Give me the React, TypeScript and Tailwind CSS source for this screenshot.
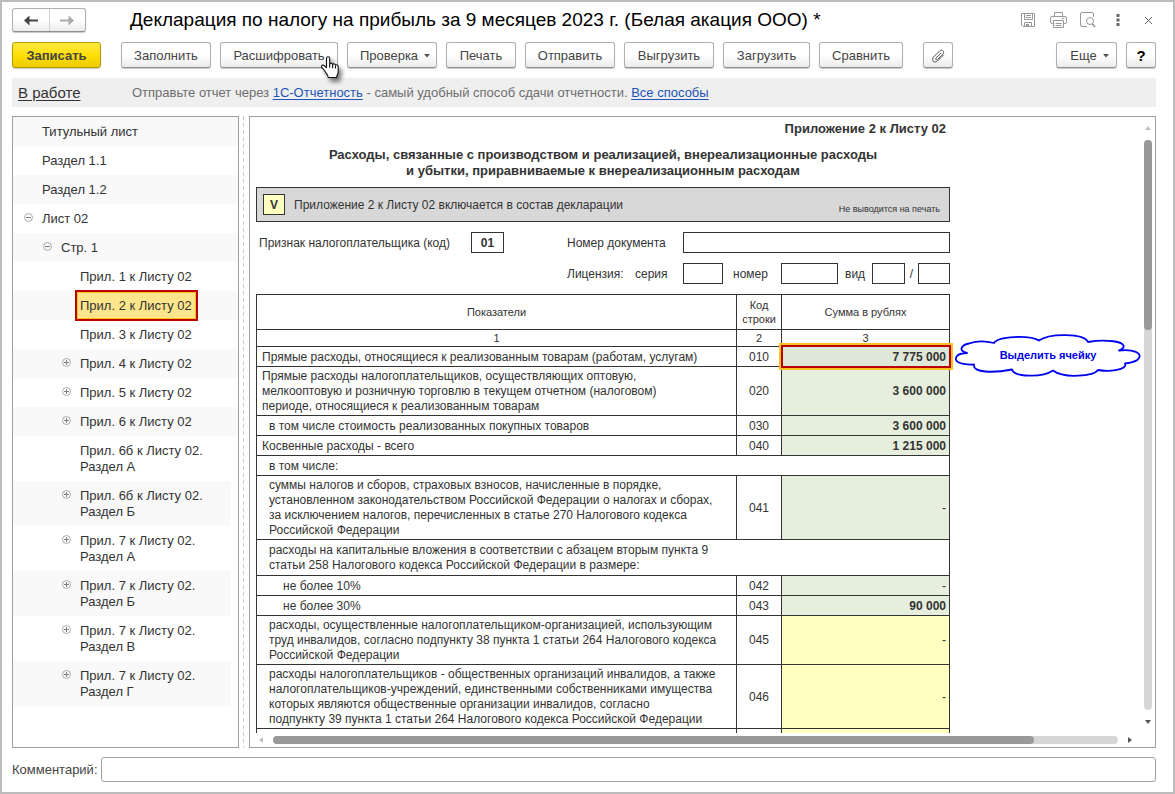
import React from 'react';

type TreeItem = {
  label: React.ReactNode;
  level: 0 | 1 | 2;
  toggle?: 'plus' | 'minus';
  selected?: boolean;
  tall?: boolean;
};

type ReportRow = {
  text: React.ReactNode;
  height: string;
  indent?: string;
  code?: string;
  value?: string;
  fill?: 'green' | 'yellow';
  active?: boolean;
};

const tree: TreeItem[] = [
  { label: 'Титульный лист', level: 0 },
  { label: 'Раздел 1.1', level: 0 },
  { label: 'Раздел 1.2', level: 0 },
  { label: 'Лист 02', level: 0, toggle: 'minus' },
  { label: 'Стр. 1', level: 1, toggle: 'minus' },
  { label: 'Прил. 1 к Листу 02', level: 2 },
  { label: 'Прил. 2 к Листу 02', level: 2, selected: true },
  { label: 'Прил. 3 к Листу 02', level: 2 },
  { label: 'Прил. 4 к Листу 02', level: 2, toggle: 'plus' },
  { label: 'Прил. 5 к Листу 02', level: 2, toggle: 'plus' },
  { label: 'Прил. 6 к Листу 02', level: 2, toggle: 'plus' },
  { label: <>Прил. 6б к Листу 02.<br />Раздел А</>, level: 2, tall: true },
  { label: <>Прил. 6б к Листу 02.<br />Раздел Б</>, level: 2, toggle: 'plus', tall: true },
  { label: <>Прил. 7 к Листу 02.<br />Раздел А</>, level: 2, toggle: 'plus', tall: true },
  { label: <>Прил. 7 к Листу 02.<br />Раздел Б</>, level: 2, toggle: 'plus', tall: true },
  { label: <>Прил. 7 к Листу 02.<br />Раздел В</>, level: 2, toggle: 'plus', tall: true },
  { label: <>Прил. 7 к Листу 02.<br />Раздел Г</>, level: 2, toggle: 'plus', tall: true },
];

const rows: ReportRow[] = [
  { text: 'Прямые расходы, относящиеся к реализованным товарам (работам, услугам)', height: 'h-5', code: '010', value: '7 775 000', fill: 'green', active: true },
  {
    text: <>Прямые расходы налогоплательщиков, осуществляющих оптовую,<br />мелкооптовую и розничную торговлю в текущем отчетном (налоговом)<br />периоде, относящиеся к реализованным товарам</>,
    height: 'h-[49px]', code: '020', value: '3 600 000', fill: 'green',
  },
  { text: 'в том числе стоимость реализованных покупных товаров', height: 'h-5', indent: 'pl-3', code: '030', value: '3 600 000', fill: 'green' },
  { text: 'Косвенные расходы - всего', height: 'h-5', code: '040', value: '1 215 000', fill: 'green' },
  { text: 'в том числе:', height: 'h-5', indent: 'pl-3' },
  {
    text: <>суммы налогов и сборов, страховых взносов, начисленные в порядке,<br />установленном законодательством Российской Федерации о налогах и сборах,<br />за исключением налогов, перечисленных в статье 270 Налогового кодекса<br />Российской Федерации</>,
    height: 'h-16', indent: 'pl-3', code: '041', value: '-', fill: 'green',
  },
  {
    text: <>расходы на капитальные вложения в соответствии с абзацем вторым пункта 9<br />статьи 258 Налогового кодекса Российской Федерации в размере:</>,
    height: 'h-9', indent: 'pl-3',
  },
  { text: 'не более 10%', height: 'h-5', indent: 'pl-[26px]', code: '042', value: '-', fill: 'green' },
  { text: 'не более 30%', height: 'h-5', indent: 'pl-[26px]', code: '043', value: '90 000', fill: 'green' },
  {
    text: <>расходы, осуществленные налогоплательщиком-организацией, использующим<br />труд инвалидов, согласно подпункту 38 пункта 1 статьи 264 Налогового кодекса<br />Российской Федерации</>,
    height: 'h-[49px]', indent: 'pl-3', code: '045', value: '-', fill: 'yellow',
  },
  {
    text: <>расходы налогоплательщиков - общественных организаций инвалидов, а также<br />налогоплательщиков-учреждений, единственными собственниками имущества<br />которых являются общественные организации инвалидов, согласно<br />подпункту 39 пункта 1 статьи 264 Налогового кодекса Российской Федерации</>,
    height: 'h-16', indent: 'pl-3', code: '046', value: '-', fill: 'yellow',
  },
  { text: '', height: 'h-5', code: ' ', value: '', fill: 'yellow' },
];

const levelPadding = ['pl-[10px]', 'pl-[29px]', 'pl-12'];

const ToolButton: React.FC<{ className?: string; children: React.ReactNode; label?: string }> = ({ className = '', children, label }) => (
  <button
    type="button"
    aria-label={label}
    className={`relative flex h-[26px] shrink-0 items-center justify-center whitespace-nowrap rounded-[3px] border border-[#b0b0b0] border-b-[#8f8f8f] bg-gradient-to-b from-white from-50% to-[#ececec] pt-0.5 text-[#444] shadow-[0_1px_1px_#c8c8c8] ${className}`}
  >
    {children}
  </button>
);

const Caret = () => (
  <svg width="6" height="4" viewBox="0 0 6 4" className="ml-1.5" fill="#555"><path d="M0 0h6L3 3.500z" /></svg>
);

const Toggle: React.FC<{ kind: 'plus' | 'minus' }> = ({ kind }) => (
  <svg width="9" height="9" viewBox="0 0 9 9" fill="none" stroke="#a8a8a8">
    <circle cx="4.500" cy="4.500" r="4" />
    <path d={kind === 'plus' ? 'M2 4.500h5M4.500 2v5' : 'M2 4.500h5'} stroke="#808080" />
  </svg>
);

const HandCursor = () => (
  <svg width="32" height="34" viewBox="0 0 32 34" className="pointer-events-none absolute left-[99px] top-[12px] z-10 drop-shadow-[3px_4px_2px_rgba(0,0,0,0.5)]">
    <path
      d="M6.5 3.5c0-2.4 3.2-2.4 3.2 0v5.6c.6-1.2 2.7-1 2.9.4.8-1 2.7-.7 2.9.7.9-.8 2.7-.3 2.7 1.3v5.3c0 2-1.5 3-1.5 5.7H8.2c0-2.5-2.2-4.3-3.7-6.9-.9-1.5-2.3-2.6-2.9-3.7-.6-1.5 1.1-2.3 2.4-1.4l2.5 2.2z"
      fill="#fff" stroke="#111" strokeWidth="1.1" strokeLinejoin="round"
    />
    <path d="M9.7 8.8v4M12.6 9.6v3.6M15.5 10.4v3" fill="none" stroke="#111" strokeWidth="1.1" />
  </svg>
);

const Header = () => (
  <header className="flex h-6 items-center">
    <div className="flex h-6 w-[74px] rounded-[3px] border border-[#b0b0b0] border-b-[#8f8f8f] bg-gradient-to-b from-white from-50% to-[#ececec] shadow-[0_1px_1px_#c8c8c8]">
      <button type="button" aria-label="Назад" className="flex flex-1 items-center justify-center border-r border-[#d0d0d0]">
        <svg width="14" height="11" viewBox="0 0 14 11" fill="#444"><path d="M0 5.500L5.500 0.500V4.500H14v2H5.500v4z" /></svg>
      </button>
      <button type="button" aria-label="Вперед" className="flex flex-1 items-center justify-center">
        <svg width="14" height="11" viewBox="0 0 14 11" fill="#aaa"><path d="M14 5.500L8.500 0.500V4.500H0v2h8.500v4z" /></svg>
      </button>
    </div>
    <h1 className="ml-11 flex-1 whitespace-nowrap text-[19px] leading-6 text-black">
      Декларация по налогу на прибыль за 9 месяцев 2023 г. (Белая акация ООО) *
    </h1>
    <div className="flex items-center pr-[3px]">
      <button type="button" aria-label="Сохранить">
        <svg width="16" height="16" viewBox="0 0 16 16" fill="none" stroke="#999">
          <path d="M1.500 1.500h13v13H3l-1.500-1.500zM4.500 1.500v6h8v-6M6 3.500h5M6 5.500h5M4.500 14.500v-4h7v4" />
          <path d="M6 12h3v3H6z" fill="#999" stroke="none" />
        </svg>
      </button>
      <button type="button" aria-label="Печать документа" className="ml-[14px]">
        <svg width="17" height="16" viewBox="0 0 17 16" fill="none" stroke="#999">
          <path d="M4.500 4.500v-4h8v4M3.500 11.500H2A1.500 1.500 0 01.5 10V6A1.500 1.500 0 012 4.500h13A1.500 1.500 0 0116.500 6v4a1.500 1.500 0 01-1.500 1.500h-1.500M3.500 8.500h10v7h-10zM5.500 11.500h6M5.500 13.500h6M12 6.500h2.500" />
        </svg>
      </button>
      <button type="button" aria-label="Предварительный просмотр" className="ml-[13px]">
        <svg width="16" height="16" viewBox="0 0 16 16" fill="none" stroke="#999">
          <path d="M13.500 5V2A1.500 1.500 0 0012 .5H2A1.500 1.500 0 00.5 2v11A1.500 1.500 0 002 14.500h5" />
          <circle cx="10" cy="9" r="3.500" />
          <path d="M12.200 11.800l2.800 3" strokeWidth="1.800" />
        </svg>
      </button>
      <button type="button" aria-label="Меню" className="ml-5">
        <svg width="4" height="12" viewBox="0 0 4 12" fill="#666"><path d="M.5 0h3v3h-3zM.5 4.500h3v3h-3zM.5 9h3v3h-3z" /></svg>
      </button>
      <button type="button" aria-label="Закрыть" className="ml-6">
        <svg width="9" height="9" viewBox="0 0 9 9" stroke="#666"><path d="M1 1l7 7M8 1L1 8" /></svg>
      </button>
    </div>
  </header>
);

const Toolbar = () => (
  <div className="mt-[10px] flex">
    <button
      type="button"
      className="mr-5 h-[26px] w-[89px] rounded-[3px] border border-[#b09a00] bg-gradient-to-b from-[#ffe83a] via-[#ffe000] to-[#edcb00] pt-0.5 font-bold text-[#444] shadow-[0_1px_1px_#c8c8c8]"
    >
      Записать
    </button>
    <div className="flex flex-1 gap-[9px]">
      <ToolButton className="w-[90px]">Заполнить</ToolButton>
      <ToolButton className="w-[118px]">
        Расшифровать
        <HandCursor />
      </ToolButton>
      <ToolButton className="w-[90px] pl-1.5">Проверка<Caret /></ToolButton>
      <ToolButton className="w-[70px]">Печать</ToolButton>
      <ToolButton className="w-[90px]">Отправить</ToolButton>
      <ToolButton className="w-[90px]">Выгрузить</ToolButton>
      <ToolButton className="w-[87px]">Загрузить</ToolButton>
      <ToolButton className="w-[84px]">Сравнить</ToolButton>
      <ToolButton className="ml-[11px] w-[30px]" label="Присоединенные файлы">
        <svg width="14" height="14" viewBox="0 0 14 14" fill="none" stroke="#555" strokeLinecap="round">
          <path d="M10 4L5 9c-1 1.200.400 2.400 1.500 1.400l5.300-5.300c2.400-2.600-.9-5.400-3.200-3.200L2.500 8c-2.700 3 .9 6.900 4 4l6-6" />
        </svg>
      </ToolButton>
    </div>
    <div className="flex gap-[9px]">
      <ToolButton className="w-[61px] pl-1.5">Еще<Caret /></ToolButton>
      <ToolButton className="w-[30px] text-[15px] font-bold text-black">?</ToolButton>
    </div>
  </div>
);

const InfoBar = () => (
  <div className="mt-[10px] flex h-[29px] items-center bg-[#efefef] pl-1.5">
    <a href="#status" className="w-[114px] text-[15px] text-[#333] underline underline-offset-2">В работе</a>
    <p className="whitespace-nowrap text-[#6e6e6e]">
      Отправьте отчет через <a href="#reporting" className="text-[#1f54b5] underline underline-offset-2">1С-Отчетность</a> - самый удобный способ сдачи отчетности.{' '}
      <a href="#all" className="text-[#1f54b5] underline underline-offset-2">Все способы</a>
    </p>
  </div>
);

const Sections = () => (
  <nav className="w-[227px] shrink-0 overflow-hidden border border-[#a0a0a0]">
    <ul>
      {tree.map((item, i) => (
        <li
          key={i}
          className={`flex ${levelPadding[item.level]} ${item.tall ? 'mr-[7px] h-[45px]' : 'h-[29px]'} ${i % 2 === 0 ? 'bg-[#f9f9f9]' : 'bg-white'}`}
        >
          <span className="w-[14px] shrink-0 pt-[9px] pl-px">{item.toggle && <Toggle kind={item.toggle} />}</span>
          {item.selected ? (
            <button type="button" className="-my-px w-[123px] border-2 border-[#b90000] bg-[#fde58b] pl-[3px] text-left leading-4 text-[#333] shadow-[inset_0_0_0_1px_#fbc21f]">
              {item.label}
            </button>
          ) : (
            <button type="button" className="pl-[5px] text-left leading-4 text-[#333]">{item.label}</button>
          )}
        </li>
      ))}
    </ul>
  </nav>
);

const Field: React.FC<{ className: string; label: string; value?: string }> = ({ className, label, value }) => (
  <input aria-label={label} defaultValue={value} className={`h-[21px] min-w-0 rounded-none border border-[#333] bg-white text-center font-bold outline-none ${className}`} />
);

const Callout = () => (
  <span className="absolute -top-[14px] left-full z-10 ml-[5px] flex h-[44px] w-[188px] items-center justify-center text-[11px] font-bold text-[#0000e6]">
    <svg width="188" height="44" viewBox="0 0 188 44" className="absolute inset-0" fill="#fff" stroke="#0000f0" strokeWidth="1.800" strokeLinejoin="round">
      <path d="M40 10C44 3 75 2 85 7.500C95 0 130 0 134 9C150 6 174 8 169 15C167 17 166 17 165 17.500C180 16 188 20 185 25C183 29 175 30 171 30.500C174 37 155 39 144 37C140 43 110 46 99 37.500C88 45 60 44 58 36.500C40 40 18 40 20 31.500C5 32 -1 28 3 23C5 21 9 20 13 20C4 18 7 12 15 10.500C22 8 32 8 40 10Z" />
    </svg>
    <span className="relative">Выделить ячейку</span>
  </span>
);

const ReportTable = () => (
  <table className="mt-[10px] w-full table-fixed border-collapse leading-[15px]">
    <colgroup>
      <col className="w-[480px]" />
      <col className="w-[45px]" />
      <col />
    </colgroup>
    <thead>
      <tr className="h-[35px] text-[11px] leading-[14px]">
        <th className="border border-[#333] p-0 font-normal">Показатели</th>
        <th className="border border-[#333] p-0 font-normal">Код<br />строки</th>
        <th className="border border-[#333] p-0 font-normal">Сумма в рублях</th>
      </tr>
      <tr className="h-[17px] text-[11px] leading-[14px]">
        <th className="border border-[#333] p-0 font-normal">1</th>
        <th className="border border-[#333] p-0 font-normal">2</th>
        <th className="border border-[#333] p-0 font-normal">3</th>
      </tr>
    </thead>
    <tbody>
      {rows.map((row, i) => (
        <tr key={i} className={row.height}>
          <td colSpan={row.code ? 1 : 3} className={`whitespace-nowrap border border-[#333] pb-0 pr-0 pt-px ${row.indent || 'pl-[5px]'}`}>
            {row.text}
          </td>
          {row.code && (
            <>
              <td className="border border-[#333] px-0 pb-0 pt-px text-center">{row.code}</td>
              <td className={`border border-[#333] pb-0 pl-0 pr-[3px] pt-px text-right ${row.active ? 'relative z-10' : ''} ${row.value === '-' ? 'font-normal' : 'font-bold'} ${row.fill === 'green' ? 'bg-[#e6efdd]' : 'bg-[#ffffc0]'}`}>
                {row.active && (
                  <>
                    <span className="absolute -bottom-1 -left-[3px] -right-1 -top-1 border-2 border-[#fbc21f] bg-[#dfe7d8]">
                      <span className="block h-full border-2 border-[#b90000]" />
                    </span>
                    <Callout />
                  </>
                )}
                <span className="relative">{row.value}</span>
              </td>
            </>
          )}
        </tr>
      ))}
    </tbody>
  </table>
);

const Report = () => (
  <div className="w-[694px] text-xs text-[#333]">
    <p className="pr-1 pt-1 text-right text-[13px] font-bold leading-4">Приложение 2 к Листу 02</p>
    <h2 className="mt-[10px] text-center text-[13px] font-bold leading-4">
      Расходы, связанные с производством и реализацией, внереализационные расходы<br />
      и убытки, приравниваемые к внереализационным расходам
    </h2>
    <div className="mt-2 flex h-[35px] items-center border border-[#333] bg-[#d8d8d8] pl-1.5 pr-[9px]">
      <label className="flex flex-1 items-center">
        <input type="checkbox" defaultChecked className="sr-only" />
        <span className="mr-[9px] flex h-[21px] w-[22px] items-center justify-center border border-[#333] bg-[#ffffc0] font-bold">V</span>
        Приложение 2 к Листу 02 включается в состав декларации
      </label>
      <span className="pt-2 text-[9px]">Не выводится на печать</span>
    </div>
    <div className="mt-[10px] flex items-center">
      <span className="w-[215px] pl-[3px]">Признак налогоплательщика (код)</span>
      <Field className="w-[33px]" label="Признак налогоплательщика (код)" value="01" />
      <span className="ml-[63px] w-[116px]">Номер документа</span>
      <Field className="flex-1" label="Номер документа" />
    </div>
    <div className="mt-[10px] flex items-center pl-[311px]">
      <span className="w-[68px]">Лицензия:</span>
      <span className="w-12">серия</span>
      <Field className="w-10" label="Серия" />
      <span className="w-[58px] pl-[10px]">номер</span>
      <Field className="w-[57px]" label="Номер" />
      <span className="w-[34px] pl-[7px]">вид</span>
      <Field className="w-[33px]" label="Вид" />
      <span className="w-[13px] text-center">/</span>
      <Field className="w-8" label="Подвид" />
    </div>
    <ReportTable />
  </div>
);

const ReportPanel = () => (
  <section className="flex min-w-0 flex-1 flex-col border border-[#a0a0a0]">
    <div className="flex min-h-0 flex-1">
      <div className="min-w-0 flex-1 overflow-hidden pl-1.5">
        <Report />
      </div>
      <div className="flex w-[11px] flex-col items-center pr-[3px] pt-[9px]">
        <svg width="6" height="4" viewBox="0 0 6 4" fill="#c0c0c0"><path d="M0 4h6L3 0z" /></svg>
        <div className="mt-[10px] w-2 flex-1 rounded-full bg-[#d6d6d6]">
          <div className="h-1/3 w-2 rounded-full bg-[#999]" />
        </div>
        <svg width="6" height="4" viewBox="0 0 6 4" className="mb-[9px] mt-[10px]" fill="#555"><path d="M0 0h6L3 4z" /></svg>
      </div>
    </div>
    <div className="flex h-[14px] items-center pl-[9px] pr-[23px]">
      <svg width="4" height="6" viewBox="0 0 4 6" fill="#c0c0c0"><path d="M4 0v6L0 3z" /></svg>
      <div className="ml-[10px] h-2 flex-1 rounded-full bg-[#d6d6d6]">
        <div className="h-2 w-9/10 rounded-full bg-[#999]" />
      </div>
      <svg width="4" height="6" viewBox="0 0 4 6" className="ml-[10px]" fill="#555"><path d="M0 0v6l4-3z" /></svg>
    </div>
  </section>
);

const App: React.FC = () => {
  return (
    <div className="flex h-screen flex-col border-2 border-[#bcbcbc] bg-white pb-[10px] pl-[10px] pr-[17px] pt-1.5 font-['Liberation_Sans',Arial,sans-serif] text-[13px] leading-4 text-[#333]">
      <Header />
      <Toolbar />
      <InfoBar />
      <main className="mt-[9px] flex min-h-0 flex-1">
        <Sections />
        <div className="ml-1 mr-[5px] w-px bg-[repeating-linear-gradient(to_bottom,#ccc_0_4px,transparent_4px_7px)]" />
        <ReportPanel />
      </main>
      <footer className="mt-[9px] flex items-center">
        <label htmlFor="comment" className="w-[89px] text-[#444]">Комментарий:</label>
        <input id="comment" type="text" className="h-[25px] min-w-0 flex-1 rounded-[3px] border border-[#a0a0a0] px-2 outline-none" />
      </footer>
    </div>
  );
};

export default App;
